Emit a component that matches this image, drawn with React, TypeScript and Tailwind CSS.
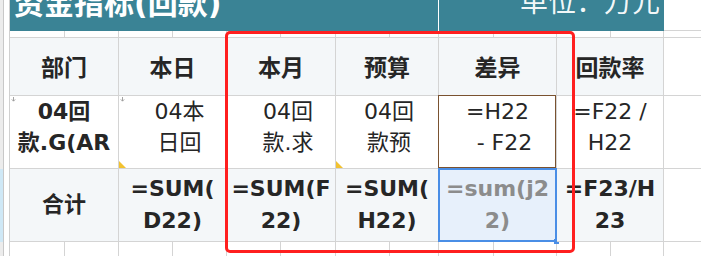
import React from "react";

const FONT = { fontFamily: '"DejaVu Sans", "Noto Sans CJK SC", sans-serif' };

const mainCols = [109, 108, 109, 103, 118, 107, 38];
const subCols = [55, 54, 54, 54, 54, 55, 54, 49, 55, 63, 54, 53, 38];

function LeftStrip({ blue = false }: { blue?: boolean }) {
  return (
    <>
      <div className={`w-[4px] shrink-0 border-r border-[#c8c8c8] ${blue ? "bg-[#cfe8f6]" : "bg-[#ececec]"}`} />
      <div className="w-[6px] shrink-0 border-r border-[#d0d0d0] bg-white" />
    </>
  );
}

function ThinRow({ h }: { h: string }) {
  return (
    <div className={`flex ${h} shrink-0`}>
      <LeftStrip />
      {subCols.map((w, i) => (
        <div key={i} style={{ width: w }} className="shrink-0 border-r border-b border-[#d4d4d4] bg-white" />
      ))}
    </div>
  );
}

function DownMark() {
  return (
    <svg className="absolute left-[1px] top-[1px]" width="5" height="5" viewBox="0 0 5 5">
      <path d="M2.5 0 V4 M0.8 2.4 L2.5 4.2 L4.2 2.4" stroke="#9a9a9a" strokeWidth="0.9" fill="none" />
    </svg>
  );
}

function YellowTri() {
  return <div className="absolute left-0 bottom-0 w-0 h-0 border-l-[7px] border-l-[#f2c230] border-t-[7px] border-t-transparent" />;
}

export default function App() {
  const header = ["部门", "本日", "本月", "预算", "差异", "回款率"];
  const data: { lines: string[]; bold?: boolean; pl?: number; mark?: boolean; tri?: boolean; brown?: boolean }[] = [
    { lines: ["04回", "款.G(AR"], bold: true, mark: true },
    { lines: ["04本", "日回"], pl: 14, mark: true, tri: true },
    { lines: ["04回", "款.求"], pl: 14 },
    { lines: ["04回", "款预"], pl: 4, tri: true },
    { lines: ["=H22", "  - F22"], brown: true },
    { lines: ["=F22 /", "H22"] },
  ];
  const totals: { lines: string[]; gray?: boolean; sel?: boolean }[] = [
    { lines: ["合计"] },
    { lines: ["=SUM(", "D22)"] },
    { lines: ["=SUM(F", "22)"] },
    { lines: ["=SUM(", "H22)"] },
    { lines: ["=sum(j2", "2)"], gray: true, sel: true },
    { lines: ["=F23/H", "23"] },
  ];

  return (
    <div className="relative w-[701px] h-[256px] overflow-hidden bg-white text-[#262626]" style={FONT}>
      {/* Title row */}
      <div className="flex h-[31px]">
        <LeftStrip />
        <div className="w-[428px] shrink-0 bg-[#3a8395] overflow-hidden text-white">
          <div className="text-[30px] font-bold leading-[30px] -mt-[11px] pl-[4px] whitespace-nowrap">资金指标(回款)</div>
        </div>
        <div className="w-[1px] shrink-0 bg-white" />
        <div className="w-[225px] shrink-0 bg-[#3a8395] overflow-hidden text-white/95">
          <div className="text-[28px] leading-[28px] -mt-[11px] pr-[4px] text-right whitespace-nowrap">单位：万元</div>
        </div>
        <div className="flex-1 border-b border-[#d4d4d4]" />
      </div>

      <ThinRow h="h-[7px]" />

      {/* Header row */}
      <div className="flex h-[58px]">
        <LeftStrip />
        {header.map((t, i) => (
          <div key={i} style={{ width: mainCols[i] }} className="shrink-0 flex items-center justify-center border-r border-b border-[#d4d4d4] bg-[#f4f7f9] text-[23px] font-bold pt-[3px]">
            {t}
          </div>
        ))}
        <div className="flex-1 border-b border-[#d4d4d4]" />
      </div>

      {/* Data row */}
      <div className="flex h-[73px]">
        <LeftStrip />
        {data.map((c, i) => (
          <div key={i} style={{ width: mainCols[i] }} className={`relative shrink-0 border-r border-b border-[#d4d4d4] bg-white text-[22px] leading-[31px] text-center ${c.bold ? "font-bold" : ""}`}>
            <div className="h-full overflow-hidden" style={{ paddingLeft: c.pl ?? 0 }}>
              {c.lines.map((l, j) => (
                <div key={j} className="whitespace-pre">{l}</div>
              ))}
            </div>
            {c.mark && <DownMark />}
            {c.tri && <YellowTri />}
            {c.brown && <div className="absolute left-[-1px] top-[-1px] right-0 bottom-0 border border-[#7a5230]" />}
          </div>
        ))}
        <div className="flex-1 border-b border-[#d4d4d4]" />
      </div>

      {/* Total row */}
      <div className="flex h-[73px]">
        <LeftStrip blue />
        {totals.map((c, i) => (
          <div key={i} style={{ width: mainCols[i] }} className={`relative shrink-0 flex flex-col items-center justify-center border-r border-b border-[#d4d4d4] text-[22px] leading-[32px] font-bold ${c.sel ? "bg-[#e7f0fb]" : "bg-[#f4f7f9]"} ${c.gray ? "text-[#8c8c8c]" : ""}`}>
            {c.lines.map((l, j) => (
              <div key={j} className="whitespace-nowrap">{l}</div>
            ))}
            {c.sel && (
              <>
                <div className="absolute left-[-1px] top-[-1px] right-[-1px] bottom-[-1px] border-2 border-[#4a8ee6]" />
                <div className="absolute right-[-3px] bottom-[-3px] w-[5px] h-[5px] bg-[#4a8ee6]" />
              </>
            )}
          </div>
        ))}
        <div className="flex-1 border-b border-[#d4d4d4]" />
      </div>

      <ThinRow h="h-[20px]" />

      {/* Red annotation box */}
      <div className="absolute left-[225px] top-[31px] w-[350px] h-[222px] border-[3px] border-[#ff1f1f] rounded-[5px]" />
    </div>
  );
}
